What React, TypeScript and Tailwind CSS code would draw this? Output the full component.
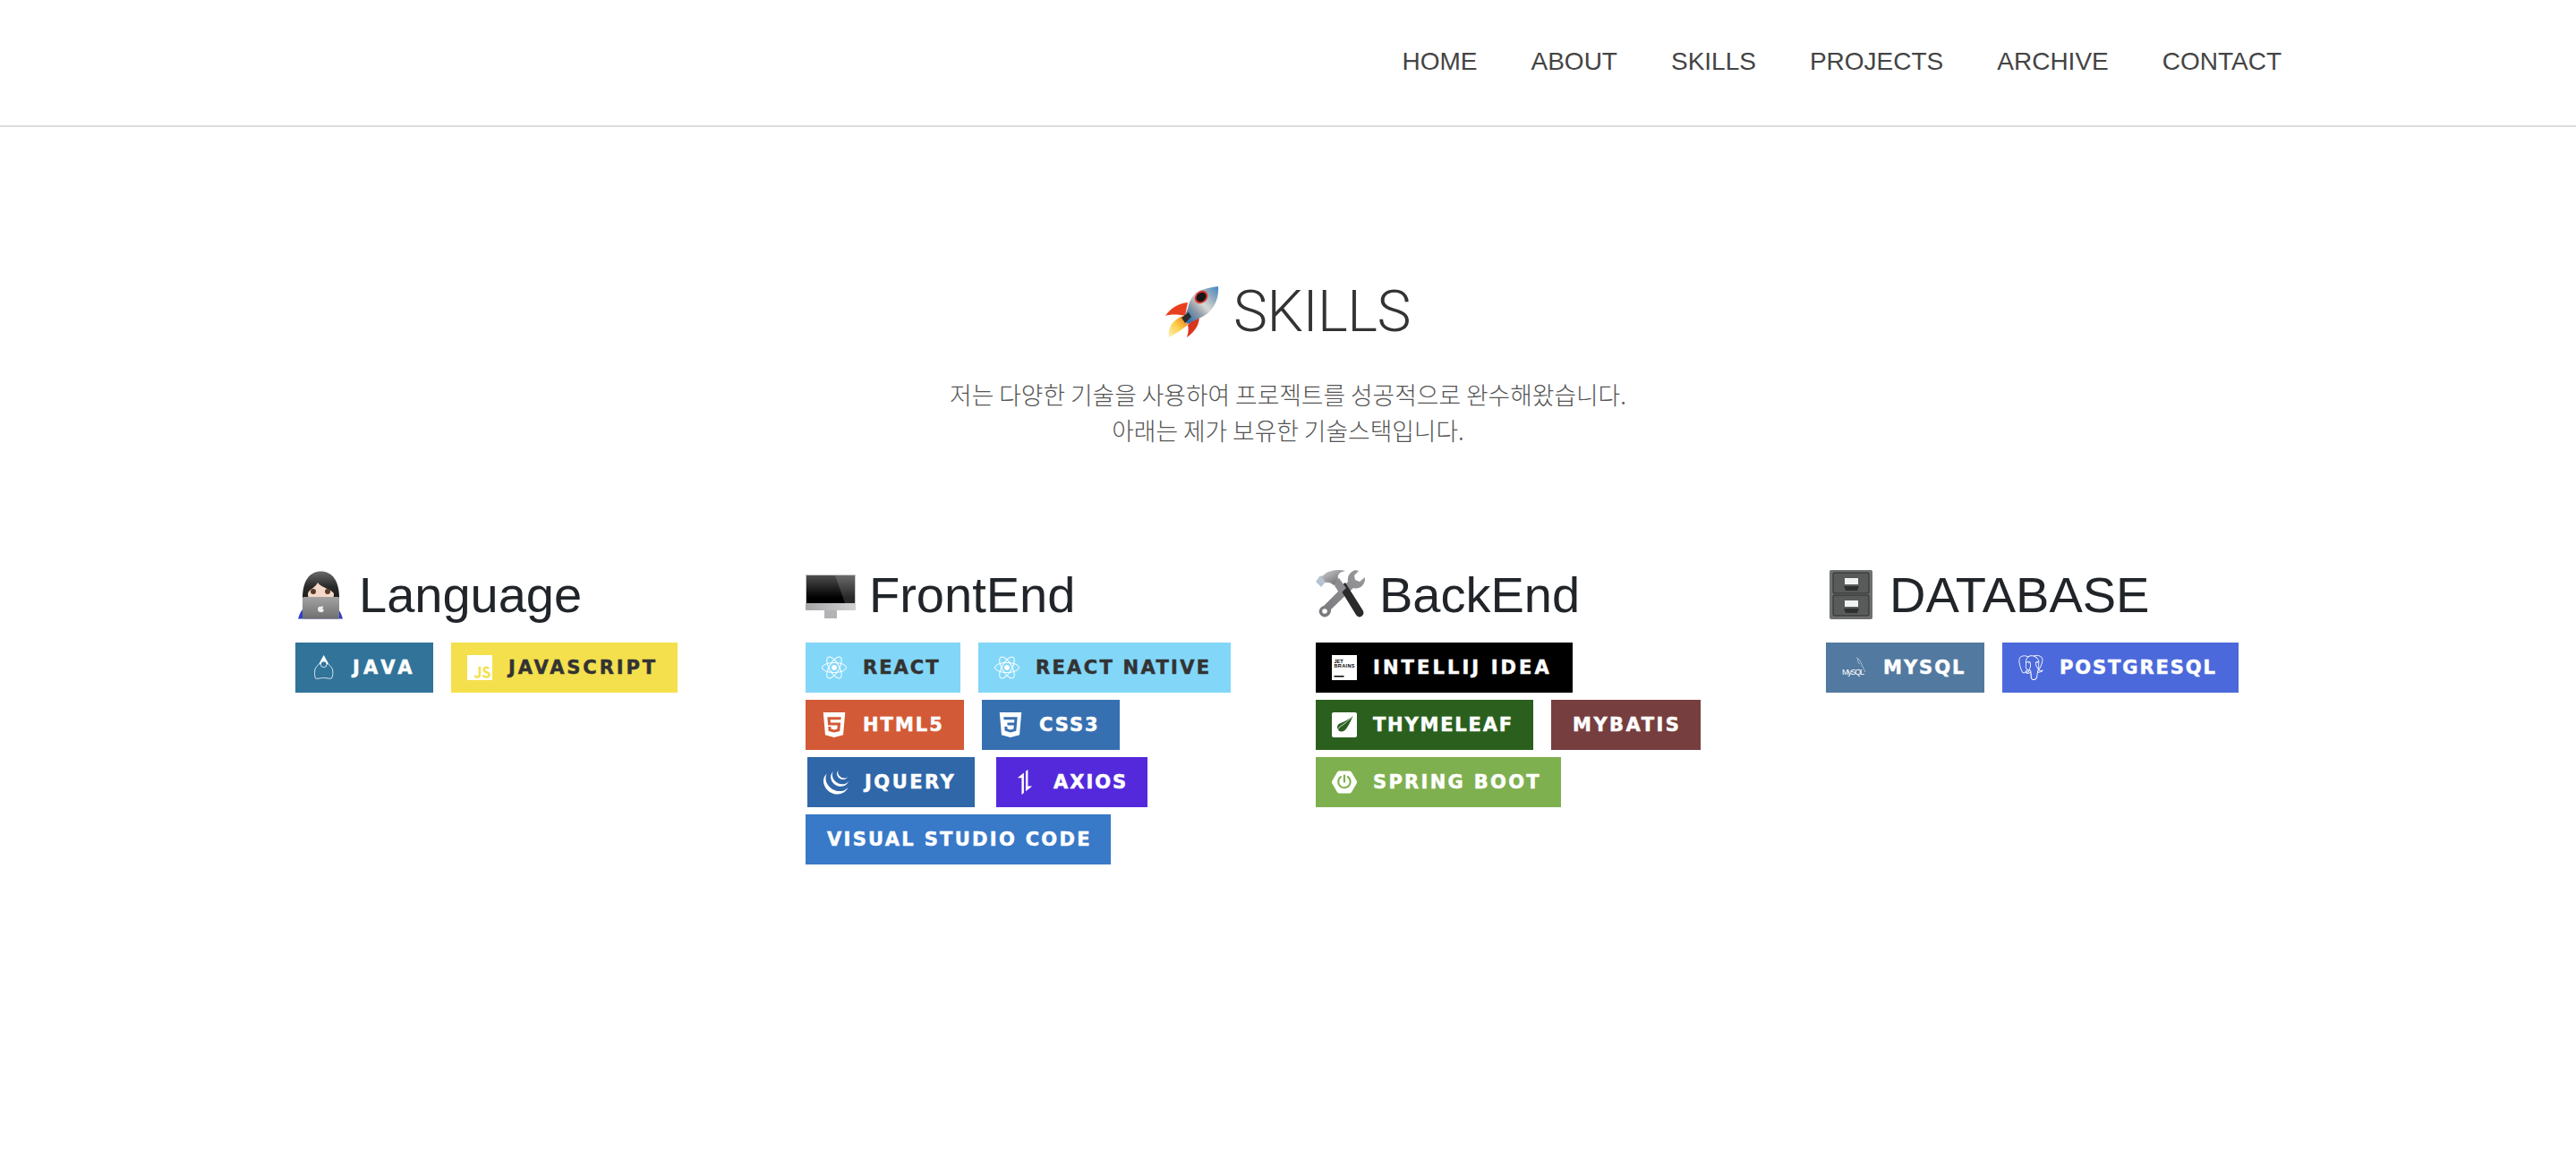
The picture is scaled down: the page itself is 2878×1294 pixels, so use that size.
import type { ReactNode } from 'react'
import { SiAxios, SiCss3, SiHtml5, SiJavascript, SiJquery, SiPostgresql, SiSpringboot, SiThymeleaf } from 'react-icons/si'

const navItems = ['HOME', 'ABOUT', 'SKILLS', 'PROJECTS', 'ARCHIVE', 'CONTACT']

type BadgeData = { label: string; bg: string; w: string; track: string; dark?: boolean; icon?: ReactNode }

function JavaIcon() {
  return (
    <svg viewBox="0 0 28 28" className="w-7 h-7" fill="none" stroke="#fff" strokeWidth="0.8">
      <path d="M8.700 9.700 C7 12 4 14 3.700 17 C3.400 20 3.300 23 4.500 26 C5.500 27 10 25.500 13.700 25.500 C17.500 25.500 21.500 27 22.500 26 C24 23 24 20 23.700 17 C23.400 14 20.500 12 18.700 9.700" />
      <path d="M13.700 0 L8.500 9.500 C10 12 17.500 12 19 9.500 Z" fill="#fff" stroke="none" />
      <circle cx="13.700" cy="10.300" r="3.400" fill="#317399" />
    </svg>
  )
}

function JetBrainsIcon() {
  return (
    <svg viewBox="0 0 28 28" className="w-7 h-7">
      <rect width="28" height="28" fill="#fff" />
      <text x="2.500" y="8.500" fontFamily="Liberation Sans, sans-serif" fontWeight="700" fontSize="5.500">JET</text>
      <text x="2.500" y="13.500" fontFamily="Liberation Sans, sans-serif" fontWeight="700" fontSize="5.500" textLength="23">BRAINS</text>
      <rect x="2.500" y="23" width="11" height="1.500" fill="#000" />
    </svg>
  )
}

function MysqlIcon() {
  return (
    <svg viewBox="0 0 28 28" className="w-7 h-7" fill="none" stroke="#fff">
      <text x="0" y="22" fill="#fff" stroke="none" fontFamily="Liberation Sans, sans-serif" fontSize="9" textLength="25">MySQL</text>
      <path d="M16 3 C19 4 21 7 22 11 C23 14 25 16 26 19 M18 4 C17 7 18 9 20 10" strokeWidth="0.500" />
    </svg>
  )
}

function ReactIcon() {
  return (
    <svg viewBox="0 0 28 28" className="w-7 h-7" fill="none" stroke="#fff" strokeWidth="1">
      <ellipse cx="14" cy="14" rx="13.500" ry="5.500" />
      <ellipse cx="14" cy="14" rx="13.500" ry="5.500" transform="rotate(60 14 14)" />
      <ellipse cx="14" cy="14" rx="13.500" ry="5.500" transform="rotate(120 14 14)" />
      <circle cx="14" cy="14" r="2.500" fill="#fff" />
    </svg>
  )
}

const i = 'w-7 h-7 text-white'
const frontend: BadgeData[] = [
  { label: 'REACT', bg: 'bg-[#82d7f8]', dark: true, w: 'w-[173px]', track: 'tracking-[2px]', icon: <ReactIcon /> },
  { label: 'REACT NATIVE', bg: 'bg-[#82d7f8]', dark: true, w: 'w-[282px]', track: 'tracking-[2.3px]', icon: <ReactIcon /> },
  { label: 'HTML5', bg: 'bg-[#d35a36]', w: 'w-[177px]', track: 'tracking-[2px]', icon: <SiHtml5 className={i} /> },
  { label: 'CSS3', bg: 'bg-[#3770b1]', w: 'w-[154px]', track: 'tracking-[2px]', icon: <SiCss3 className={i} /> },
  { label: 'JQUERY', bg: 'bg-[#2f67a8]', w: 'w-[187px] ml-[2px]', track: 'tracking-[2.5px]', icon: <SiJquery className={i} /> },
  { label: 'AXIOS', bg: 'bg-[#5429dc]', w: 'w-[169px] ml-[4px]', track: 'tracking-[2px]', icon: <SiAxios className={i} /> },
  { label: 'VISUAL STUDIO CODE', bg: 'bg-[#3879c8]', w: 'w-[341px]', track: 'tracking-[2.3px]' },
]

const groups: { title: string; emoji: ReactNode; badges: BadgeData[] }[] = [
  {
    title: 'Language',
    emoji: <WomanEmoji />,
    badges: [
      { label: 'JAVA', bg: 'bg-[#317399]', w: 'w-[154px]', track: 'tracking-[4.3px]', icon: <JavaIcon /> },
      { label: 'JAVASCRIPT', bg: 'bg-[#f4e04d]', dark: true, w: 'w-[253px]', track: 'tracking-[2.9px]', icon: <SiJavascript className={i} /> },
    ],
  },
  { title: 'FrontEnd', emoji: <MonitorEmoji />, badges: frontend },
  {
    title: 'BackEnd',
    emoji: <ToolsEmoji />,
    badges: [
      { label: 'INTELLIJ IDEA', bg: 'bg-black', w: 'w-[287px]', track: 'tracking-[3.1px]', icon: <JetBrainsIcon /> },
      { label: 'THYMELEAF', bg: 'bg-[#2a5f1e]', w: 'w-[243px]', track: 'tracking-[1.8px]', icon: <SiThymeleaf className={i} /> },
      { label: 'MYBATIS', bg: 'bg-[#763e3e]', w: 'w-[167px]', track: 'tracking-[2.5px]' },
      { label: 'SPRING BOOT', bg: 'bg-[#7fb04f]', w: 'w-[274px]', track: 'tracking-[2.3px]', icon: <SiSpringboot className={i} /> },
    ],
  },
  {
    title: 'DATABASE',
    emoji: <CabinetEmoji />,
    badges: [
      { label: 'MYSQL', bg: 'bg-[#52799f]', w: 'w-[177px]', track: 'tracking-[2px]', icon: <MysqlIcon /> },
      { label: 'POSTGRESQL', bg: 'bg-[#4c69db]', w: 'w-[264px]', track: 'tracking-[1.9px]', icon: <SiPostgresql className={i} /> },
    ],
  },
]

function RocketEmoji() {
  return (
    <svg viewBox="0 0 60 57" className="w-[60px] h-[57px] shrink-0">
      <defs>
        <linearGradient id="rb" x1="1" y1="0" x2="0.1" y2="0.9">
          <stop offset="0" stopColor="#3f86cc" />
          <stop offset="0.25" stopColor="#8fa9bd" />
          <stop offset="0.5" stopColor="#d8d8d4" />
          <stop offset="0.72" stopColor="#8d9aa6" />
          <stop offset="1" stopColor="#2f6fb0" />
        </linearGradient>
        <linearGradient id="rf" x1="1" y1="0" x2="0" y2="1">
          <stop offset="0" stopColor="#ef6a1e" />
          <stop offset="0.5" stopColor="#fbce46" />
          <stop offset="1" stopColor="#fff0b8" />
        </linearGradient>
      </defs>
      <path d="M25 18 C15 19 6 24 0 33 C5 31 14 31 22 33 Z" fill="#e8401f" />
      <path d="M37 30 C40 40 34 50 24 57 C26 51 26 47 25 43 Z" fill="#d9361c" />
      <path d="M19 33 L25 43 C19 48 11 53 4 57 C3 51 5 46 7 42 C10 38 15 35 19 33 Z" fill="url(#rf)" />
      <path d="M59 0 C50 1 41 3 34 7 C29 12 26 19 25 25 L20 37 L25 42 L35 37 C42 34 49 30 52 25 C56 20 60 11 59 0 Z" fill="url(#rb)" />
      <ellipse cx="40" cy="12" rx="8" ry="6.500" transform="rotate(-40 40 12)" fill="#d9392e" />
      <ellipse cx="40" cy="12" rx="6" ry="4.800" transform="rotate(-40 40 12)" fill="#151515" />
      <path d="M18 35 L26 29 L29 34 L22 41 Z" fill="#2b2b2b" />
    </svg>
  )
}

function WomanEmoji() {
  return (
    <svg viewBox="0 0 56 56" className="w-14 h-14 shrink-0">
      <defs>
        <linearGradient id="hair" x1="0" y1="0" x2="0" y2="1">
          <stop offset="0" stopColor="#6a6a6a" />
          <stop offset="0.4" stopColor="#2a2a2a" />
          <stop offset="1" stopColor="#111" />
        </linearGradient>
        <linearGradient id="lap" x1="0" y1="0" x2="0" y2="1">
          <stop offset="0" stopColor="#a3a3a3" />
          <stop offset="1" stopColor="#6f6f6f" />
        </linearGradient>
      </defs>
      <path d="M3 54.500 C5 48 7 44 10 43 L46 43 C49 44 51 48 53 54.500 Z" fill="#2f3fc4" />
      <path d="M8 31 C8 12 16 1.500 28.500 1.500 C41 1.500 49 12 49 31 L49 44 L8 44 Z" fill="url(#hair)" />
      <path d="M14 26 C16 21 22 20 25 14 C29 20 38 20 43 26 C43 31 42 32 41 33 L16 33 C15 32 14 31 14 26 Z" fill="#f3d9c8" />
      <circle cx="20" cy="24" r="3" fill="#5a3a28" />
      <circle cx="36" cy="24" r="3" fill="#5a3a28" />
      <rect x="8" y="30" width="41" height="24.500" rx="1.500" fill="url(#lap)" />
      <path d="M28.500 41 C30 40 31.500 41 31.500 41 C30 42 30 44 32 44.500 C31 47 30 47.500 28.500 47 C27 47.500 25 46 25 44 C25 41 27 40 28.500 41 Z" fill="#eee" />
    </svg>
  )
}

function MonitorEmoji() {
  return (
    <svg viewBox="0 0 56 56" className="w-14 h-14 shrink-0">
      <defs>
        <linearGradient id="scr" x1="0" y1="0" x2="0" y2="1">
          <stop offset="0" stopColor="#4e4e4e" />
          <stop offset="0.8" stopColor="#000" />
        </linearGradient>
        <linearGradient id="chin" x1="0" y1="0" x2="1" y2="0">
          <stop offset="0" stopColor="#a5a5a8" />
          <stop offset="1" stopColor="#d2d2d4" />
        </linearGradient>
      </defs>
      <rect x="0" y="5" width="56" height="33" fill="#c8c8c8" />
      <rect x="1" y="6" width="54" height="31" fill="url(#scr)" />
      <path d="M33 6 L55 6 L55 37 L44 37 Z" fill="#fff" fillOpacity="0.16" />
      <rect x="0" y="37" width="56" height="8" rx="1" fill="url(#chin)" />
      <rect x="21" y="45" width="14" height="9" fill="#b3b3b5" />
    </svg>
  )
}

function ToolsEmoji() {
  return (
    <svg viewBox="0 0 56 56" className="w-14 h-14 shrink-0">
      <defs>
        <linearGradient id="wr" x1="1" y1="0" x2="0" y2="1">
          <stop offset="0" stopColor="#9a9a9d" />
          <stop offset="1" stopColor="#77777b" />
        </linearGradient>
        <linearGradient id="hm" x1="0" y1="0" x2="1" y2="1">
          <stop offset="0" stopColor="#d4d4d6" />
          <stop offset="1" stopColor="#5c5c60" />
        </linearGradient>
      </defs>
      <path d="M44 0 C38 2 35 7 36 13 L9 40 C5 41 3 45 4 48 C6 53 12 54 15 50 C17 48 17 46 17 44 L42 20 C48 22 54 18 55 11 L55 8 L49 13 L44 11 L43 6 L48 1 Z" fill="url(#wr)" />
      <circle cx="10" cy="46" r="2.800" fill="#fff" />
      <path d="M26 19 L33 14 L52 44 C54 47 54 49 52 51 C50 53 47 53 45 50 Z" fill="#2b2b2b" />
      <path d="M19 14 L26 9 L34 20 L27 27 Z" fill="#8c8c90" />
      <path d="M12 3 C18 0 26 -1 33 1 C27 2 24 5 25 9 L20 17 C16 13 12 13 8 15 L4 9 Z" fill="url(#hm)" />
      <path d="M0 13 L5 6 L11 13 L6 19 Z" fill="#b4c4d2" />
    </svg>
  )
}

function CabinetEmoji() {
  const drawer = (y: number) => (
    <g key={y}>
      <rect x="8" y={y} width="40" height="23" rx="1" fill="#595b5b" stroke="#2c2d2d" strokeWidth="1" />
      <rect x="21" y={y + 6} width="15" height="7" fill="#f2f2f2" />
      <path d={`M20 ${y + 15} L37 ${y + 15} L35 ${y + 20} L22 ${y + 20} Z`} fill="#2e2f2f" />
    </g>
  )
  return (
    <svg viewBox="0 0 56 56" className="w-14 h-14 shrink-0">
      <rect x="4" y="0" width="48" height="55" rx="2" fill="#6e7070" />
      {drawer(3)}
      {drawer(28)}
    </svg>
  )
}

function Badge({ label, bg, w, track, dark, icon }: BadgeData) {
  return (
    <div className={`h-14 flex items-center gap-[18px] whitespace-nowrap overflow-hidden ${icon ? 'pl-[18px]' : 'pl-6'} ${bg} ${w}`}>
      {icon}
      <span className={`pt-[2px] text-[21px] font-bold [-webkit-text-stroke:0.5px_currentColor] font-['DejaVu_Sans',sans-serif] ${track} ${dark ? 'text-[#333333]' : 'text-white'}`}>{label}</span>
    </div>
  )
}

export default function App() {
  return (
    <div className="min-h-[1294px] bg-white font-['Liberation_Sans','Noto_Sans_CJK_KR',sans-serif]">
      <header className="h-[142px] border-b-2 border-[#dddddd] flex justify-end items-start pt-[48px] pr-[329px]">
        <nav className="flex gap-[60px] text-[28px] leading-[42px] text-[#444444]">
          {navItems.map(item => <a key={item}>{item}</a>)}
        </nav>
      </header>

      <section className="pt-[169px] flex flex-col items-center">
        <h2 className="flex items-center gap-[16px] font-['Roboto',sans-serif] font-light text-[64px] leading-[75px] tracking-[-0.5px] text-[#333333]">
          <RocketEmoji />
          SKILLS
        </h2>
        <p className="mt-[35px] text-center text-[26.75px] leading-[40px] font-light text-[#555555] font-['Noto_Sans_CJK_KR',sans-serif]">
          저는 다양한 기술을 사용하여 프로젝트를 성공적으로 완수해왔습니다.
          <br />
          아래는 제가 보유한 기술스택입니다.
        </p>
      </section>

      <section className="mt-[130px] pl-[330px] grid grid-cols-[repeat(4,570px)]">
        {groups.map(g => (
          <div key={g.title}>
            <h3 className="flex items-center gap-[15px] mb-5 text-[56px] leading-[67px] text-[#212529]">
              {g.emoji}
              {g.title}
            </h3>
            <div className="flex flex-wrap gap-x-5 gap-y-2 w-[500px]">
              {g.badges.map(b => <Badge key={b.label} {...b} />)}
            </div>
          </div>
        ))}
      </section>
    </div>
  )
}
